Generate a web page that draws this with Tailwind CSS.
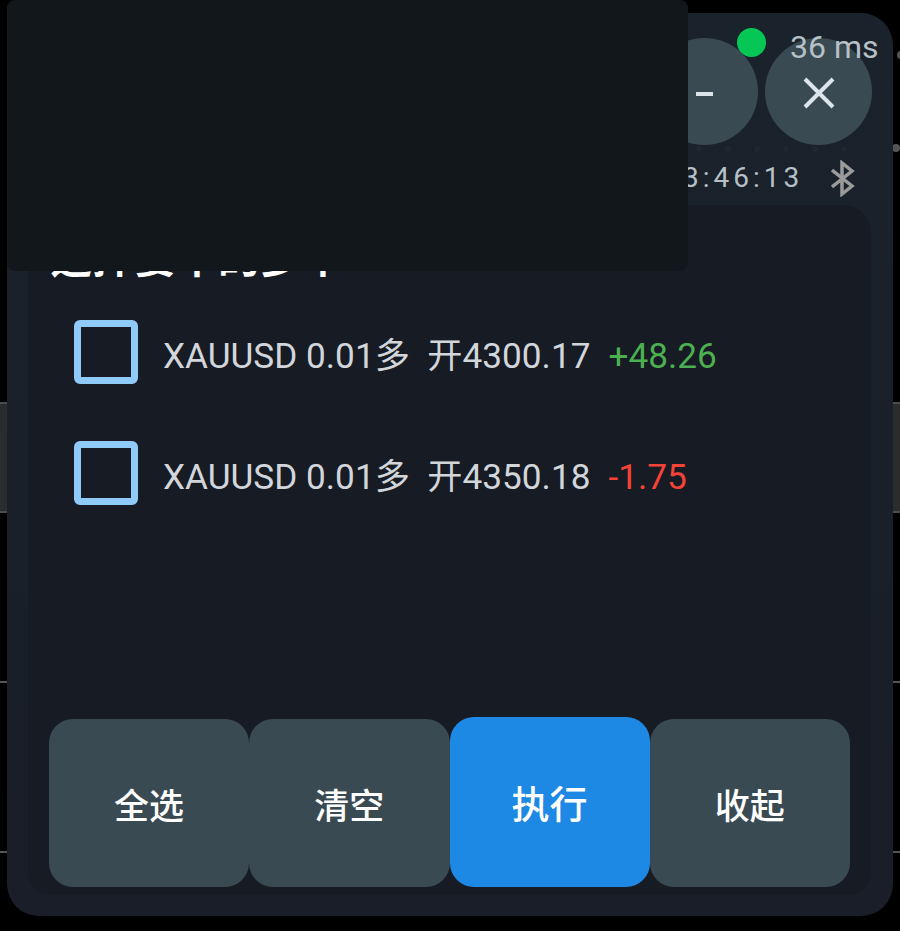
<!DOCTYPE html>
<html lang="en">
<head>
    <meta charset="UTF-8">
    <meta name="viewport" content="width=device-width, initial-scale=1.0">
    <title>Close positions</title>
    <script src="https://cdn.jsdelivr.net/npm/@tailwindcss/browser@4"></script>
</head>
<body class="bg-black h-[931px] w-[900px] overflow-hidden relative font-['Roboto','Noto_Sans_CJK_SC',sans-serif]">
    <!-- Background chart bits showing at the screen edges -->
    <div class="absolute left-0 top-[402px] w-[7px] h-[111px] bg-[#2a2c2e] border-y-2 border-[#4a4c4e]"></div>
    <div class="absolute right-0 top-[402px] w-[7px] h-[111px] bg-[#2a2c2e] border-y-2 border-[#4a4c4e]"></div>
    <div class="absolute left-0 top-[681px] w-[7px] h-[2px] bg-[#555]"></div>
    <div class="absolute right-0 top-[681px] w-[7px] h-[2px] bg-[#555]"></div>
    <div class="absolute left-0 top-[851px] w-[7px] h-[2px] bg-[#555]"></div>
    <div class="absolute right-0 top-[851px] w-[7px] h-[2px] bg-[#555]"></div>
    <div class="absolute left-[892px] top-[144px] w-[8px] h-[8px] rounded-full bg-[#555]"></div>
    <div class="absolute left-[897px] top-[51px] w-[8px] h-[8px] rounded-full bg-[#555]"></div>

    <!-- Dialog -->
    <div class="absolute left-[7px] top-[13px] w-[886px] h-[903px] rounded-[32px] bg-linear-to-b from-[#1a222c] to-[#191e28] flex flex-col overflow-hidden">
        <!-- Status row -->
        <div class="h-[192px] relative shrink-0">
            <span class="absolute left-[730px] top-[15px] w-[29px] h-[29px] rounded-full bg-[#06c755]"></span>
            <button class="absolute left-[644px] top-[25px] w-[107px] h-[107px] rounded-full bg-[#3a4a52] flex items-center justify-center">
                <span class="block w-[17px] h-[4px] mt-[4px] bg-[#dbe5ea]"></span>
            </button>
            <button class="absolute left-[758px] top-[25px] w-[107px] h-[107px] rounded-full bg-[#3a4a52] flex items-center justify-center">
                <svg class="mt-[3px]" width="32" height="32" viewBox="0 0 32 32" fill="none" stroke="#dbe5ea" stroke-width="4"><path d="M2 2 30 30M30 2 2 30"/></svg>
            </button>
            <span class="absolute left-[783px] top-[15px] text-[32px] leading-[38px] text-[#b6c0c6]">36 ms</span>
            <!-- Faint dotted line under the buttons -->
            <div class="absolute left-[689px] top-[133px] flex gap-[23px]">
                <i class="block w-[6px] h-[6px] rounded-full bg-[#1f2730]"></i>
                <i class="block w-[6px] h-[6px] rounded-full bg-[#1f2730]"></i>
                <i class="block w-[6px] h-[6px] rounded-full bg-[#1f2730]"></i>
                <i class="block w-[6px] h-[6px] rounded-full bg-[#1f2730]"></i>
                <i class="block w-[6px] h-[6px] rounded-full bg-[#1f2730]"></i>
                <i class="block w-[6px] h-[6px] rounded-full bg-[#1f2730]"></i>
            </div>
            <span class="absolute left-[676px] top-[146px] text-[28px] leading-[38px] tracking-[4px] text-[#b6c0c6]">3:46:13</span>
            <svg class="absolute left-[824px] top-[147px]" width="24" height="37" viewBox="0 0 24 37" fill="none" stroke="#9a9a9a" stroke-width="3.5"><path d="M1 10 21 26 11 34V3L21 11 1 27"/></svg>
        </div>

        <!-- Inner panel -->
        <div class="ml-[21px] mr-[22px] flex-1 rounded-t-[28px] rounded-b-[24px] bg-[#161b24] mb-[21px] flex flex-col px-[21px]">
            <h2 class="text-[42px] leading-[48px] font-bold text-white mt-[30px] ml-[1px] whitespace-nowrap">选择要平的多单</h2>
            <div class="flex-1 flex flex-col">
                <div class="flex items-center mt-[37px] h-[64px] pl-[25px] text-[35.2px] text-[#d2d6db]">
                    <span class="w-[64px] h-[64px] rounded-[6px] border-[7px] border-[#90caf9] shrink-0"></span>
                    <span class="ml-[25px] pt-[8px]">XAUUSD 0.01多&nbsp; 开4300.17</span>
                    <span class="ml-[18px] pt-[8px] text-[#4caf50]">+48.26</span>
                </div>
                <div class="flex items-center mt-[57px] h-[64px] pl-[25px] text-[35.2px] text-[#d2d6db]">
                    <span class="w-[64px] h-[64px] rounded-[6px] border-[7px] border-[#90caf9] shrink-0"></span>
                    <span class="ml-[25px] pt-[8px]">XAUUSD 0.01多&nbsp; 开4350.18</span>
                    <span class="ml-[18px] pt-[8px] text-[#f44336]">-1.75</span>
                </div>
            </div>
            <div class="flex h-[170px] items-end mb-[8px]">
                <button class="flex-1 h-[168px] pt-[10px] rounded-[24px] bg-[#3a4a52] text-white text-[35px] font-medium">全选</button>
                <button class="flex-1 h-[168px] pt-[10px] rounded-[24px] bg-[#3a4a52] text-white text-[35px] font-medium">清空</button>
                <button class="flex-1 h-[170px] pt-[6px] rounded-[24px] bg-[#1e88e5] text-white text-[38px] font-medium">执行</button>
                <button class="flex-1 h-[168px] pt-[10px] rounded-[24px] bg-[#3a4a52] text-white text-[35px] font-medium">收起</button>
            </div>
        </div>
    </div>

    <!-- Block covering the top left of the dialog -->
    <div class="absolute left-[7px] top-0 w-[681px] h-[271px] rounded-[8px] bg-[#12171c]"></div>
</body>
</html>
